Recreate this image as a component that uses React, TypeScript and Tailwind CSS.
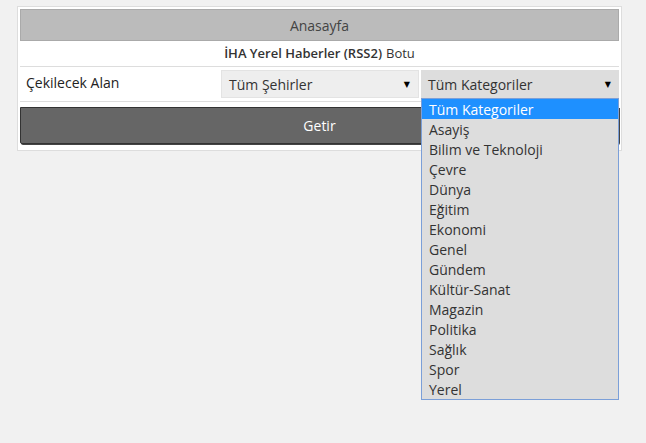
const kategoriler = [
  "Tüm Kategoriler",
  "Asayiş",
  "Bilim ve Teknoloji",
  "Çevre",
  "Dünya",
  "Eğitim",
  "Ekonomi",
  "Genel",
  "Gündem",
  "Kültür-Sanat",
  "Magazin",
  "Politika",
  "Sağlık",
  "Spor",
  "Yerel",
];

function Arrow() {
  return <span className="mr-[2px] text-[8px] leading-none text-black">▼</span>;
}

export default function App() {
  return (
    <div
      className="min-h-[443px] bg-[#f1f1f1] pt-[6px] text-[#333]"
      style={{ fontFamily: '"Open Sans", "DejaVu Sans", sans-serif' }}
    >
      <div className="ml-[17px] w-[605px] border border-[#dddddd] bg-white p-[2px] pb-[6px]">
        <div className="flex h-[32px] items-center justify-center border border-[#aaaaaa] bg-[#bbbbbb] text-[14px] text-[#444]">
          Anasayfa
        </div>
        <div className="flex h-[26px] items-center justify-center border-b border-[#dddddd] text-[13px]">
          <span className="font-semibold">İHA Yerel Haberler (RSS2)</span>
          <span className="ml-1">Botu</span>
        </div>
        <div className="grid h-[35px] grid-cols-[199px_198px_198px] items-center gap-[2px] border-b border-[#dddddd]">
          <div className="pl-[6px] pb-[3px] text-[14px] text-[#222]">Çekilecek Alan</div>
          <div className="flex h-[28px] items-center justify-between border border-[#e3e3e3] bg-[#eeeeee] pl-[7px] pr-[6px] text-[14px]">
            <span>Tüm Şehirler</span>
            <Arrow />
          </div>
          <div className="relative">
            <div className="flex h-[28px] items-center justify-between bg-[#dddddd] pl-[7px] pr-[6px] text-[14px]">
              <span>Tüm Kategoriler</span>
              <Arrow />
            </div>
            <ul className="absolute left-0 top-[28px] z-10 w-[198px] border border-[#7b9fd8] bg-[#dddddd] text-[14px]">
              {kategoriler.map((k, i) => (
                <li
                  key={k}
                  className={
                    i === 0
                      ? "flex h-[20px] items-center bg-[#1e90ff] pl-[7px] text-white"
                      : "flex h-[20px] items-center pl-[7px]"
                  }
                >
                  {k}
                </li>
              ))}
            </ul>
          </div>
        </div>
        <button className="mt-[5px] flex h-[37px] w-full items-center justify-center rounded-b-[2px] border border-[#333] bg-[#666666] text-[14px] text-white shadow-[1px_1px_0_#444]">
          Getir
        </button>
      </div>
    </div>
  );
}
